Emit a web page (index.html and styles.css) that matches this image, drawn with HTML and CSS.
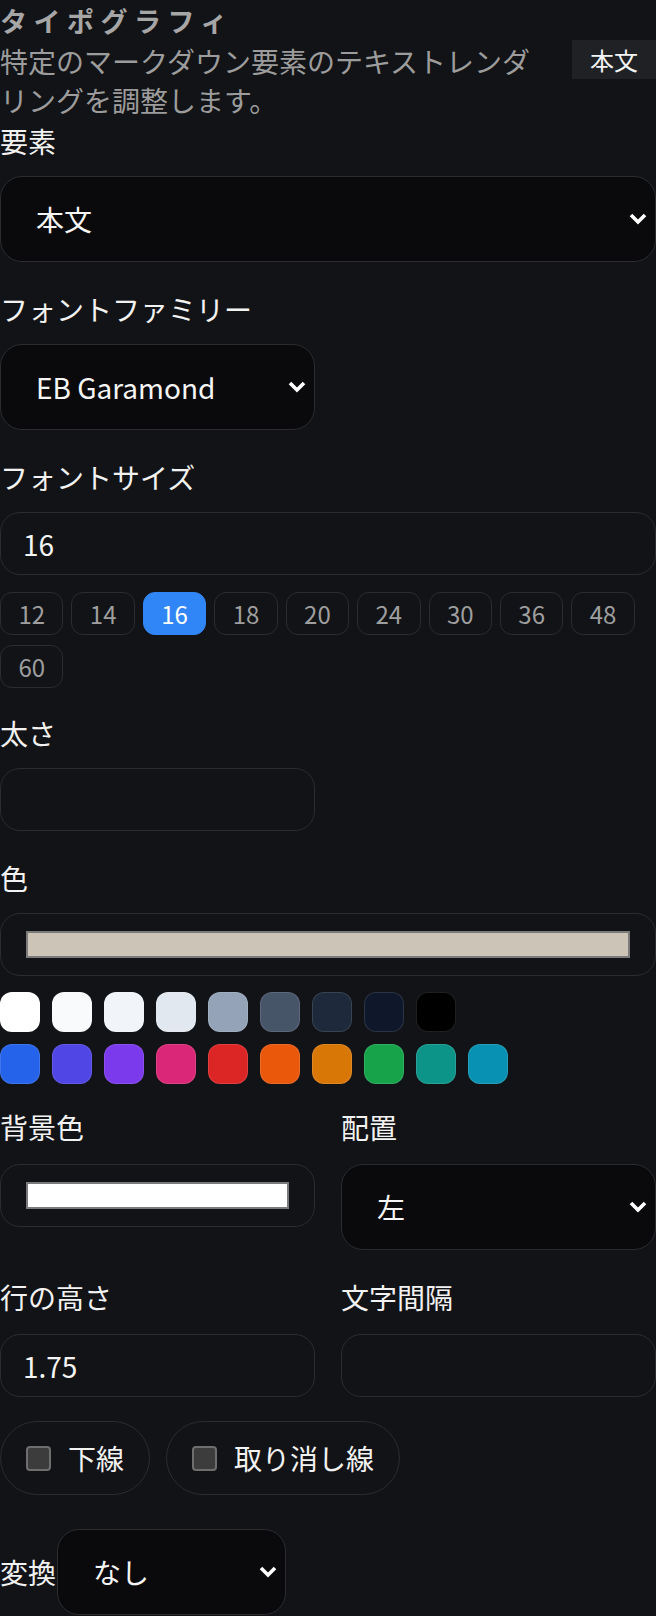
FILE: index.html
```html
<!DOCTYPE html>
<html lang="ja">
<head>
<meta charset="utf-8">
<title>タイポグラフィ</title>
<link rel="stylesheet" href="styles.css">
</head>
<body>
<div class="panel">
  <div class="title">タイポグラフィ</div>
  <div class="head-row">
    <p class="desc">特定のマークダウン要素のテキストレンダリングを調整します。</p>
    <span class="badge">本文</span>
  </div>

  <div class="field">
    <div class="label">要素</div>
    <div class="select-wrap">
      <select class="select"><option>本文</option></select>
      <svg class="chev" width="18" height="12" viewBox="0 0 18 12"><polyline points="2,2 9,9 16,2" fill="none" stroke="#fff" stroke-width="3.6"/></svg>
    </div>
  </div>

  <div class="field">
    <div class="label">フォントファミリー</div>
    <div class="select-wrap half">
      <select class="select"><option>EB Garamond</option></select>
      <svg class="chev" width="18" height="12" viewBox="0 0 18 12"><polyline points="2,2 9,9 16,2" fill="none" stroke="#fff" stroke-width="3.6"/></svg>
    </div>
  </div>

  <div class="field field-chips">
    <div class="label">フォントサイズ</div>
    <input class="input" type="text" value="16">
    <div class="chips">
      <span class="chip">12</span>
      <span class="chip">14</span>
      <span class="chip active">16</span>
      <span class="chip">18</span>
      <span class="chip">20</span>
      <span class="chip">24</span>
      <span class="chip">30</span>
      <span class="chip">36</span>
      <span class="chip">48</span>
      <span class="chip">60</span>
    </div>
  </div>

  <div class="field">
    <div class="label">太さ</div>
    <input class="input half" type="text" value="">
  </div>

  <div class="field field-swatches">
    <div class="label">色</div>
    <div class="color-input"><span class="color-fill beige"></span></div>
    <div class="swatches">
      <div class="swatch-row">
        <span class="sw" style="background:#ffffff"></span>
        <span class="sw" style="background:#f8fafc"></span>
        <span class="sw" style="background:#f1f5f9"></span>
        <span class="sw" style="background:#e2e8f0"></span>
        <span class="sw" style="background:#94a3b8"></span>
        <span class="sw" style="background:#475569"></span>
        <span class="sw" style="background:#1e293b"></span>
        <span class="sw" style="background:#0f172a"></span>
        <span class="sw" style="background:#000000"></span>
      </div>
      <div class="swatch-row">
        <span class="sw" style="background:#2563eb"></span>
        <span class="sw" style="background:#4f46e5"></span>
        <span class="sw" style="background:#7c3aed"></span>
        <span class="sw" style="background:#db2777"></span>
        <span class="sw" style="background:#dc2626"></span>
        <span class="sw" style="background:#ea580c"></span>
        <span class="sw" style="background:#d97706"></span>
        <span class="sw" style="background:#16a34a"></span>
        <span class="sw" style="background:#0d9488"></span>
        <span class="sw" style="background:#0891b2"></span>
      </div>
    </div>
  </div>

  <div class="grid">
    <div class="cell">
      <div class="label">背景色</div>
      <div class="color-input"><span class="color-fill white"></span></div>
    </div>
    <div class="cell">
      <div class="label">配置</div>
      <div class="select-wrap">
        <select class="select"><option>左</option></select>
        <svg class="chev" width="18" height="12" viewBox="0 0 18 12"><polyline points="2,2 9,9 16,2" fill="none" stroke="#fff" stroke-width="3.6"/></svg>
      </div>
    </div>
    <div class="cell">
      <div class="label">行の高さ</div>
      <input class="input" type="text" value="1.75">
    </div>
    <div class="cell">
      <div class="label">文字間隔</div>
      <input class="input" type="text" value="">
    </div>
  </div>

  <div class="pills">
    <label class="pill"><input type="checkbox" class="cb"><span>下線</span></label>
    <label class="pill"><input type="checkbox" class="cb"><span>取り消し線</span></label>
  </div>

  <div class="inline-field">
    <span class="inline-label">変換</span>
    <div class="select-wrap narrow">
      <select class="select"><option>なし</option></select>
      <svg class="chev" width="18" height="12" viewBox="0 0 18 12"><polyline points="2,2 9,9 16,2" fill="none" stroke="#fff" stroke-width="3.6"/></svg>
    </div>
  </div>
</div>
</body>
</html>
```

FILE: styles.css
```css
* { box-sizing: border-box; }

html, body {
  margin: 0;
  padding: 0;
  background: #121316;
}

body {
  font-family: "Noto Sans CJK JP", "Noto Sans", sans-serif;
  color: #f2f2f2;
  font-size: 28px;
}

.panel {
  width: 656px;
}

.title {
  font-size: 27px;
  font-weight: 700;
  line-height: 42px;
  letter-spacing: 0.24em;
  color: #a6a6a6;
}

.head-row {
  display: flex;
  align-items: flex-start;
  gap: 24px;
}

.desc {
  flex: 1;
  margin: 0;
  font-size: 28px;
  line-height: 39px;
  color: #9c9c9c;
}

.badge {
  flex: none;
  margin-top: -2px;
  height: 39px;
  line-height: 39px;
  padding: 0 18px;
  background: #202124;
  color: #f4f4f4;
  font-size: 24px;
}

.field {
  margin-bottom: 26px;
}

.field-chips {
  margin-bottom: 24px;
}

.field-swatches {
  margin-bottom: 22px;
}

.label {
  line-height: 42px;
  margin-bottom: 14px;
  color: #f2f2f2;
}

.cell .label {
  margin-bottom: 16px;
}

.select-wrap {
  position: relative;
  width: 100%;
}

.select-wrap.half { width: 315px; }
.select-wrap.narrow { width: 229px; }

.select {
  -webkit-appearance: none;
  appearance: none;
  display: block;
  width: 100%;
  height: 86px;
  margin: 0;
  padding: 0 40px 0 35px;
  border: 1px solid #2b2c30;
  border-radius: 22px;
  background: #0a0a0c;
  color: #f5f5f5;
  font-family: inherit;
  font-size: 28px;
  outline: none;
}

.chev {
  position: absolute;
  right: 9px;
  top: 50%;
  margin-top: -6px;
  pointer-events: none;
}

.input {
  display: block;
  width: 100%;
  height: 63px;
  margin: 0;
  padding: 0 22px;
  border: 1px solid #2b2c30;
  border-radius: 20px;
  background: transparent;
  color: #f5f5f5;
  font-family: inherit;
  font-size: 28px;
  outline: none;
}

.input.half { width: 315px; }

.chips {
  display: flex;
  flex-wrap: wrap;
  gap: 10px 8px;
  margin-top: 17px;
}

.chip {
  height: 43px;
  line-height: 41px;
  padding: 0 17.4px;
  border: 1px solid #2b2c30;
  border-radius: 12px;
  color: #9e9e9e;
  font-size: 24px;
}

.chip.active {
  background: #3186f7;
  border-color: #3186f7;
  color: #ffffff;
}

.color-input {
  height: 63px;
  border: 1px solid #2b2c30;
  border-radius: 20px;
  padding: 17px 25px;
}

.color-fill {
  display: block;
  height: 27px;
  border: 2px solid #7a7a7a;
}

.color-fill.beige { background: #cbc4b7; }
.color-fill.white { background: #ffffff; }

.swatches {
  display: flex;
  flex-direction: column;
  gap: 12px;
  margin-top: 16px;
}

.swatch-row {
  display: flex;
  gap: 12px;
}

.sw {
  width: 40px;
  height: 40px;
  border-radius: 12px;
  border: 1px solid rgba(255, 255, 255, 0.12);
}

.grid {
  display: grid;
  grid-template-columns: 315px 315px;
  column-gap: 26px;
  row-gap: 26px;
  align-items: start;
  margin-bottom: 24px;
}

.pills {
  display: flex;
  gap: 16px;
  margin-bottom: 34px;
}

.pill {
  display: flex;
  align-items: center;
  gap: 17px;
  height: 74px;
  padding: 0 25px 0 25px;
  border: 1px solid #2b2c30;
  border-radius: 37px;
  color: #f2f2f2;
}

.cb {
  -webkit-appearance: none;
  appearance: none;
  width: 25px;
  height: 25px;
  margin: 0;
  border: 2px solid #6e6e6e;
  border-radius: 4px;
  background: #3c3c3c;
}

.inline-field {
  display: flex;
  align-items: center;
}

.inline-label {
  width: 57px;
  color: #f2f2f2;
}
```
